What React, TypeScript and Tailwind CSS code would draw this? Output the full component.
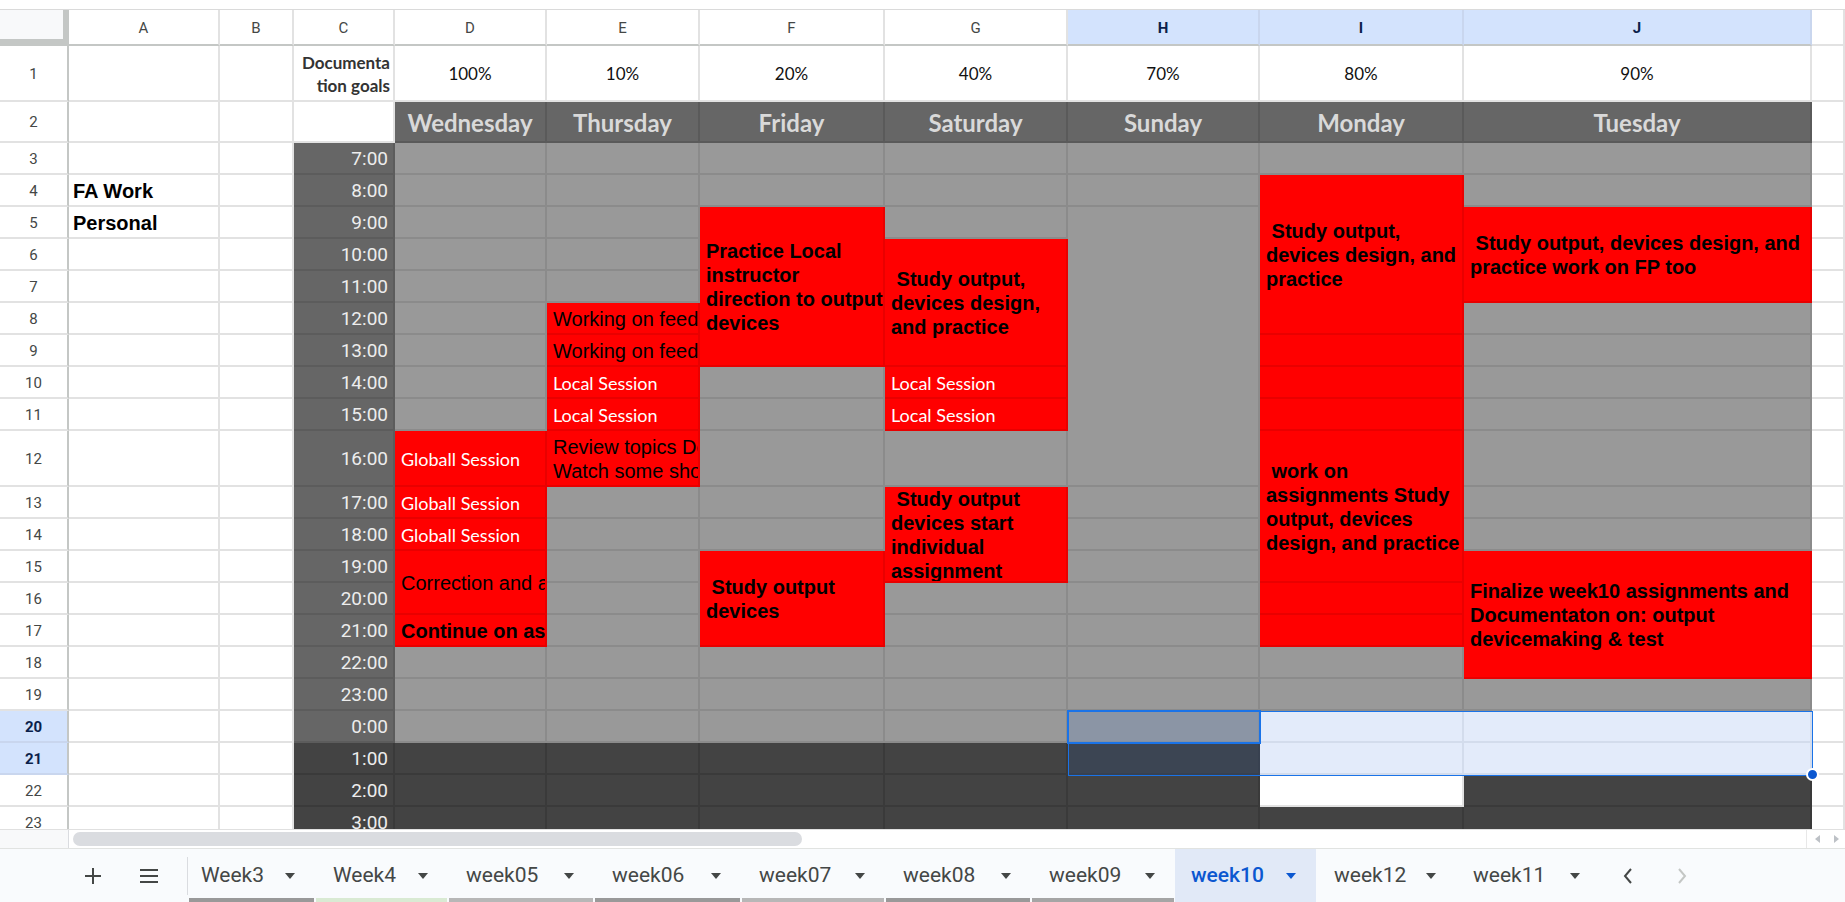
import React from "react";

const ARIAL = "font-['Liberation_Sans',Arial,sans-serif]";
const LATO = "font-['Lato',sans-serif]";
const ROBOTO = "font-['Roboto',sans-serif]";

type Kind =
  | "white"
  | "gray"
  | "red"
  | "dark"
  | "time"
  | "day"
  | "selGray"
  | "selDark"
  | "selWhite"
  | "rowhdr"
  | "rowhdrSel"
  | "colhdr"
  | "colhdrSel"
  | "corner";

const KIND: Record<Kind, string> = {
  white: "bg-white border-r-2 border-b-2 border-[#e2e2e2]",
  gray: "bg-[#999999] border-r-2 border-b-2 border-[#8b8b8b]",
  red: "bg-[#ff0000] border-r-2 border-b-2 border-[#e90000]",
  dark: "bg-[#434343] border-r-2 border-b-2 border-[#3a3a3a]",
  time: "bg-[#666666] border-r-2 border-b-2 border-[#5c5c5c]",
  day: "bg-[#666666] border-r-2 border-b-2 border-[#5a5a5a]",
  selGray: "bg-[#8b95a5] border-r-2 border-b-2 border-[#8390a2]",
  selDark: "bg-[#3c4553] border-r-2 border-b-2 border-[#384150]",
  selWhite: "bg-[#e3ebfa] border-r-2 border-b-2 border-[#d3dcec]",
  rowhdr: "bg-white border-r-2 border-b-2 border-[#e2e2e2] border-r-[#c4c7c5] justify-center",
  rowhdrSel: "bg-[#d3e3fd] border-r-2 border-b-2 border-[#c9d6ee] border-r-[#c4c7c5] justify-center",
  colhdr: "bg-white border-r-2 border-b-2 border-[#e2e2e2] border-b-[#c4c7c5] justify-center",
  colhdrSel: "bg-[#d3e3fd] border-r-2 border-b-2 border-[#c9d6ee] border-b-[#c4c7c5] justify-center",
  corner: "bg-[#f8f9fa] border-r-[6px] border-b-[7px] border-[#c4c7c5]",
};

type Cell = { r: number; c: number; span: number; kind: Kind; content?: React.ReactNode; extra?: string };

const cells: Cell[] = [];
const add = (c: number, r: number, kind: Kind, content?: React.ReactNode, span = 1, extra = "") =>
  cells.push({ r, c, span, kind, content, extra });
const fill = (c: number, from: number, to: number, kind: Kind) => {
  for (let r = from; r <= to; r++) add(c, r, kind);
};

const Sess = ({ t }: { t: string }) => (
  <span className={`${LATO} text-[18px] text-white pl-[6px] whitespace-nowrap`}>{t}</span>
);

const Txt = ({ lines, bold = false }: { lines: string[]; bold?: boolean }) => (
  <div
    className={`${ARIAL} text-[20px] leading-[24px] text-black whitespace-pre pl-[6px] ${bold ? "font-bold" : ""}`}
  >
    {lines.map((l, i) => (
      <div key={i}>{l}</div>
    ))}
  </div>
);

// Header row (r = 0)
add(1, 0, "corner");
const letters = ["A", "B", "C", "D", "E", "F", "G", "H", "I", "J"];
letters.forEach((L, i) => {
  const sel = L === "H" || L === "I" || L === "J";
  add(
    i + 2,
    0,
    sel ? "colhdrSel" : "colhdr",
    <span className={`${ROBOTO} text-[15px] ${sel ? "font-bold text-[#0b1f4b]" : "text-[#444746]"}`}>{L}</span>
  );
});
add(12, 0, "white");

// Row headers
for (let r = 1; r <= 23; r++) {
  const sel = r === 20 || r === 21;
  add(
    1,
    r,
    sel ? "rowhdrSel" : "rowhdr",
    <span className={`${ROBOTO} text-[15px] ${sel ? "font-bold text-[#0b1f4b]" : "text-[#444746]"}`}>{r}</span>
  );
}

// Columns A, B, K
for (let r = 1; r <= 23; r++) {
  if (r === 4)
    add(2, r, "white", <span className={`${ARIAL} font-bold text-[20px] text-black pl-[4px]`}>FA Work</span>);
  else if (r === 5)
    add(2, r, "white", <span className={`${ARIAL} font-bold text-[20px] text-black pl-[4px]`}>Personal</span>);
  else add(2, r, "white");
  add(3, r, "white");
  add(12, r, "white");
}

// Column C
add(
  4,
  1,
  "white",
  <div className={`${LATO} font-bold text-[17px] leading-[23px] text-[#333333] text-right w-full pr-[3px] whitespace-nowrap`}>
    <div>Documenta</div>
    <div>tion goals</div>
  </div>
);
add(4, 2, "white");
for (let r = 3; r <= 23; r++) {
  const h = (r + 4) % 24;
  add(
    4,
    r,
    r >= 21 ? "dark" : "time",
    <span className={`${ROBOTO} text-[19px] text-[#ededed] w-full text-right pr-[5px]`}>{h}:00</span>
  );
}

// Row 1 percentages, row 2 day names
const pct = ["100%", "10%", "20%", "40%", "70%", "80%", "90%"];
const days = ["Wednesday", "Thursday", "Friday", "Saturday", "Sunday", "Monday", "Tuesday"];
pct.forEach((p, i) => {
  add(i + 5, 1, "white", <span className={`${LATO} text-[17px] text-[#111111] w-full text-center`}>{p}</span>);
  add(
    i + 5,
    2,
    "day",
    <span className={`${LATO} font-bold text-[24px] text-[#d9d9d9] w-full text-center`}>{days[i]}</span>
  );
});

// D - Wednesday
fill(5, 3, 11, "gray");
add(5, 12, "red", <Sess t="Globall Session" />);
add(5, 13, "red", <Sess t="Globall Session" />);
add(5, 14, "red", <Sess t="Globall Session" />);
add(5, 15, "red", <Txt lines={["Correction and assignments"]} />, 2);
add(5, 17, "red", <Txt lines={["Continue on assignments"]} bold />);
fill(5, 18, 20, "gray");
fill(5, 21, 23, "dark");

// E - Thursday
fill(6, 3, 7, "gray");
add(6, 8, "red", <Txt lines={["Working on feedback"]} />);
add(6, 9, "red", <Txt lines={["Working on feedback"]} />);
add(6, 10, "red", <Sess t="Local Session" />);
add(6, 11, "red", <Sess t="Local Session" />);
add(6, 12, "red", <Txt lines={["Review topics Design", "Watch some short videos"]} />);
fill(6, 13, 20, "gray");
fill(6, 21, 23, "dark");

// F - Friday
fill(7, 3, 4, "gray");
add(7, 5, "red", <Txt lines={["Practice Local", "instructor", "direction to output", "devices"]} bold />, 5);
fill(7, 10, 14, "gray");
add(7, 15, "red", <Txt lines={[" Study output", "devices"]} bold />, 3);
fill(7, 18, 20, "gray");
fill(7, 21, 23, "dark");

// G - Saturday
fill(8, 3, 5, "gray");
add(8, 6, "red", <Txt lines={[" Study output,", "devices design,", "and practice"]} bold />, 4);
add(8, 10, "red", <Sess t="Local Session" />);
add(8, 11, "red", <Sess t="Local Session" />);
add(8, 12, "gray");
add(8, 13, "red", <Txt lines={[" Study output", "devices start", "individual", "assignment"]} bold />, 3);
fill(8, 16, 20, "gray");
fill(8, 21, 23, "dark");

// H - Sunday
fill(9, 3, 4, "gray");
add(9, 5, "gray", undefined, 8);
fill(9, 13, 19, "gray");
add(9, 20, "selGray");
add(9, 21, "selDark");
fill(9, 22, 23, "dark");

// I - Monday
add(10, 3, "gray");
add(10, 4, "red", <Txt lines={[" Study output,", "devices design, and", "practice"]} bold />, 5);
fill(10, 9, 11, "red");
add(
  10,
  12,
  "red",
  <Txt lines={[" work on", "assignments Study", "output, devices", "design, and practice"]} bold />,
  4
);
fill(10, 16, 17, "red");
fill(10, 18, 19, "gray");
fill(10, 20, 21, "selWhite");
add(10, 22, "white");
add(10, 23, "dark");

// J - Tuesday
fill(11, 3, 4, "gray");
add(11, 5, "red", <Txt lines={[" Study output, devices design, and", "practice work on FP too"]} bold />, 3);
fill(11, 8, 14, "gray");
add(
  11,
  15,
  "red",
  <Txt lines={["Finalize week10 assignments and", "Documentaton on: output", "devicemaking & test"]} bold />,
  4
);
add(11, 19, "gray");
fill(11, 20, 21, "selWhite");
fill(11, 22, 23, "dark");

const tabs: { name: string; w: string; bar?: string; pl?: string; active?: boolean }[] = [
  { name: "Week3", w: "w-[127px]", bar: "bg-[#999999]", pl: "pl-[13px]" },
  { name: "Week4", w: "w-[133px]", bar: "bg-[#d9ead3]" },
  { name: "week05", w: "w-[146px]", bar: "bg-[#b7b7b7]" },
  { name: "week06", w: "w-[147px]", bar: "bg-[#999999]" },
  { name: "week07", w: "w-[144px]", bar: "bg-[#b7b7b7]" },
  { name: "week08", w: "w-[146px]", bar: "bg-[#999999]" },
  { name: "week09", w: "w-[144px]", bar: "bg-[#a5a5a5]" },
  { name: "week10", w: "w-[141px]", active: true, pl: "pl-[16px]" },
  { name: "week12", w: "w-[140px]" },
  { name: "week11", w: "w-[144px]", pl: "pl-[17px]" },
];

const Tri = ({ color }: { color: string }) => (
  <svg width="10" height="6" viewBox="0 0 10 6">
    <path d="M0 0 L10 0 L5 6 Z" fill={color} />
  </svg>
);

export default function App() {
  return (
    <div className="w-[1845px] h-[902px] overflow-hidden bg-white flex flex-col">
      <div className="h-[10px] shrink-0 border-b border-[#dadada] bg-white" />
      <div className="relative h-[819px] shrink-0 overflow-hidden">
        <div className="grid grid-cols-[69px_151px_74px_101px_152px_153px_185px_183px_192px_204px_348px_33px] grid-rows-[36px_56px_41px_repeat(9,32px)_56px_repeat(11,32px)]">
          {cells.map((cell, i) => (
            <div
              key={i}
              className={`flex items-center overflow-hidden box-border min-w-0 min-h-0 pt-[2px] ${KIND[cell.kind]} ${cell.extra}`}
              style={{ gridRow: `${cell.r + 1} / span ${cell.span}`, gridColumn: `${cell.c} / span 1` }}
            >
              {cell.content}
            </div>
          ))}
        </div>
        {/* selection overlay */}
        <div className="absolute left-[1068px] top-[701px] w-[745px] h-[65px] border border-[#1a73e8] pointer-events-none" />
        <div className="absolute left-[1067px] top-[700px] w-[194px] h-[34px] border-2 border-[#1a73e8] pointer-events-none" />
        <div className="absolute left-[1806px] top-[758px] w-[13px] h-[13px] rounded-full bg-[#0b57d0] border-2 border-white pointer-events-none" />
      </div>

      {/* horizontal scrollbar */}
      <div className="h-[19px] shrink-0 flex items-center border-t border-[#e0e0e0] bg-white">
        <div className="w-[69px] h-full bg-[#f8f9fa] border-r border-[#dadce0]" />
        <div className="ml-[4px] w-[729px] h-[14px] rounded-full bg-[#dadce0]" />
        <div className="ml-auto mr-[6px] flex items-center h-full gap-[14px] pl-[8px] border-l border-[#e8e8e8]">
          <svg width="5" height="8" viewBox="0 0 5 8">
            <path d="M5 0 L0 4 L5 8 Z" fill="#bdc1c6" />
          </svg>
          <svg width="5" height="8" viewBox="0 0 5 8">
            <path d="M0 0 L5 4 L0 8 Z" fill="#bdc1c6" />
          </svg>
        </div>
      </div>

      {/* sheet tabs */}
      <div className={`h-[54px] shrink-0 flex items-stretch bg-[#f9fbfd] border-t border-[#e1e3e1] ${ROBOTO}`}>
        <div className="w-[188px] flex items-center shrink-0">
          <div className="w-[31px] ml-[77px] flex justify-center">
            <svg width="18" height="18" viewBox="0 0 18 18">
              <path d="M9 1 V17 M1 9 H17" stroke="#444746" strokeWidth="2" />
            </svg>
          </div>
          <div className="ml-[31px] flex justify-center">
            <svg width="20" height="16" viewBox="0 0 20 16">
              <path d="M1 2 H19 M1 8 H19 M1 14 H19" stroke="#444746" strokeWidth="2" />
            </svg>
          </div>
          <div className="ml-auto w-px h-[38px] bg-[#dadce0]" />
        </div>
        {tabs.map((t) => (
          <div
            key={t.name}
            className={`relative shrink-0 ${t.w} ${t.pl ?? "pl-[18px]"} flex items-center ${t.active ? "bg-[#e1e9f7]" : ""}`}
          >
            <span className={`text-[21px] ${t.active ? "text-[#0b57d0] font-medium" : "text-[#444746]"}`}>
              {t.name}
            </span>
            <span className="ml-auto mr-[20px] flex items-center">
              <Tri color={t.active ? "#0b57d0" : "#444746"} />
            </span>
            {t.bar && <div className={`absolute left-[1px] right-[1px] bottom-0 h-[4px] ${t.bar}`} />}
          </div>
        ))}
        <div className="flex items-center ml-[22px] gap-[42px]">
          <svg width="12" height="18" viewBox="0 0 12 18">
            <path d="M9 2 L3 9 L9 16" stroke="#444746" strokeWidth="2" fill="none" />
          </svg>
          <svg width="12" height="18" viewBox="0 0 12 18">
            <path d="M3 2 L9 9 L3 16" stroke="#c4c7c5" strokeWidth="2" fill="none" />
          </svg>
        </div>
      </div>
    </div>
  );
}
